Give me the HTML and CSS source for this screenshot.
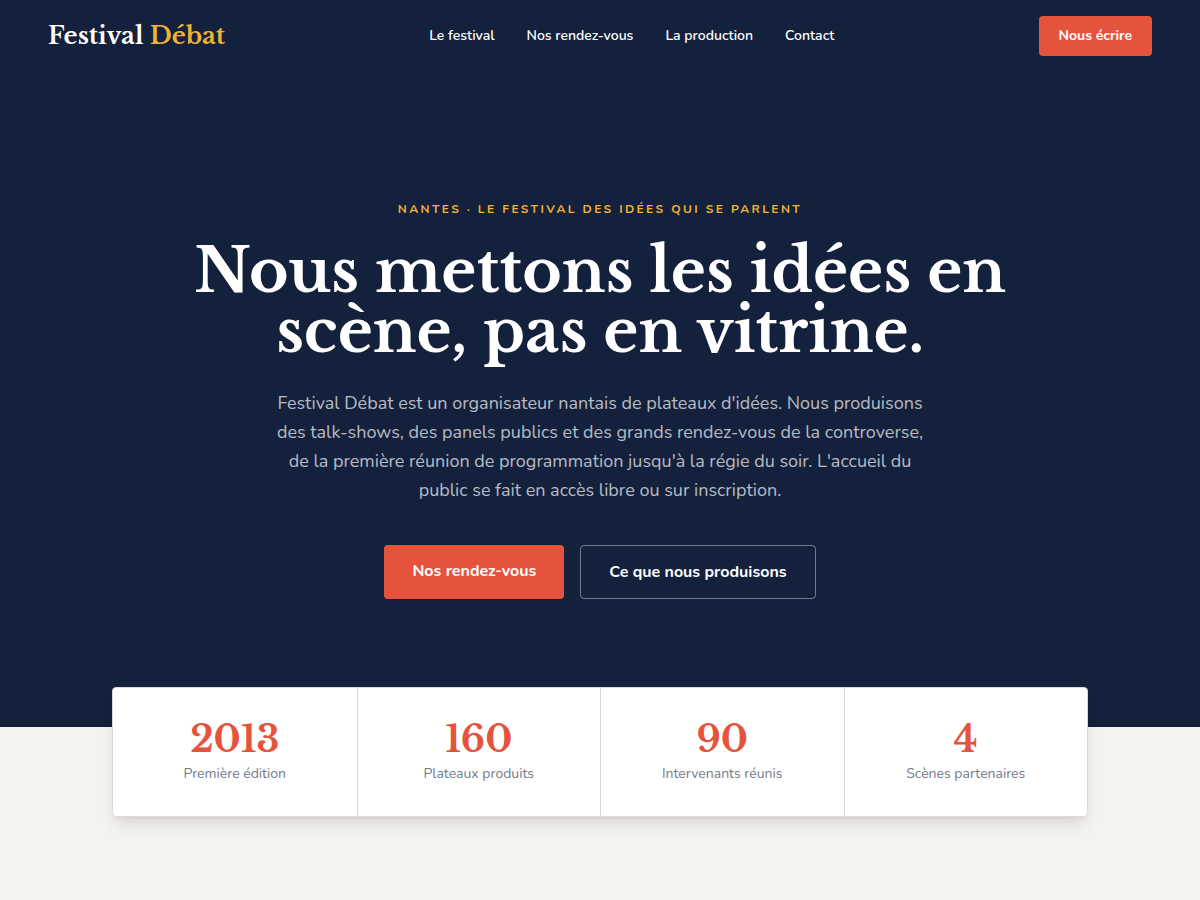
FILE: index.html
```html
<!DOCTYPE html>
<html lang="fr">
<head>
    <meta charset="UTF-8">
    <meta name="viewport" content="width=device-width, initial-scale=1.0">
    <title>Festival Débat</title>
    <link rel="stylesheet" href="styles.css">
</head>
<body>
    <!-- Header -->
    <header class="site-header">
        <a class="logo" href="#">Festival <span>Débat</span></a>
        <nav class="main-nav">
            <a href="#festival">Le festival</a>
            <a href="#rendez-vous">Nos rendez-vous</a>
            <a href="#production">La production</a>
            <a href="#contact">Contact</a>
        </nav>
        <a class="btn btn-small" href="#contact">Nous écrire</a>
    </header>

    <main>
        <!-- Hero -->
        <section class="hero" id="festival">
            <p class="eyebrow">Nantes · Le festival des idées qui se parlent</p>
            <h1>Nous mettons les idées en scène, pas en vitrine.</h1>
            <p class="lead">Festival Débat est un organisateur nantais de plateaux d'idées. Nous produisons des talk-shows, des panels publics et des grands rendez-vous de la controverse, de la première réunion de programmation jusqu'à la régie du soir. L'accueil du public se fait en accès libre ou sur inscription.</p>
            <div class="actions">
                <a class="btn" href="#rendez-vous">Nos rendez-vous</a>
                <a class="btn btn-outline" href="#production">Ce que nous produisons</a>
            </div>
        </section>

        <!-- Chiffres -->
        <section class="stats">
            <div class="stat">
                <strong>2013</strong>
                <span>Première édition</span>
            </div>
            <div class="stat">
                <strong>160</strong>
                <span>Plateaux produits</span>
            </div>
            <div class="stat">
                <strong>90</strong>
                <span>Intervenants réunis</span>
            </div>
            <div class="stat">
                <strong>4</strong>
                <span>Scènes partenaires</span>
            </div>
        </section>
    </main>
</body>
</html>
```
FILE: styles.css
```css
/* Reset */
* {
    margin: 0;
    padding: 0;
    box-sizing: border-box;
}

body {
    min-height: 100vh;
    font-family: Nunito, "Open Sans", sans-serif;
    background: #f5f3ee;
    color: #14213d;
    line-height: 1.6;
}

a {
    text-decoration: none;
}

/* Header */
.site-header {
    display: flex;
    justify-content: space-between;
    align-items: center;
    padding: 16px 48px;
    background: #14213d;
}

.logo {
    font-family: "Libre Baskerville", "Liberation Serif", serif;
    font-size: 24px;
    font-weight: 700;
    line-height: 40px;
    color: #fff;
}

.logo span {
    color: #f2b134;
}

.main-nav {
    display: flex;
    gap: 32px;
}

.main-nav a {
    color: #fff;
    font-size: 14px;
    font-weight: 600;
}

/* Buttons */
.btn {
    display: block;
    padding: 14px 28px;
    border-radius: 4px;
    background: #e6533c;
    color: #fff;
    font-size: 16px;
    font-weight: 700;
    line-height: 24px;
}

.btn-small {
    padding: 8px 20px;
    font-size: 14px;
}

.btn-outline {
    background: transparent;
    border: 1px solid rgba(255, 255, 255, 0.4);
}

/* Hero */
.hero {
    display: flex;
    flex-direction: column;
    align-items: center;
    padding: 128px 48px;
    background: #14213d;
    text-align: center;
}

.eyebrow {
    margin-bottom: 23px;
    color: #f2b134;
    font-size: 12px;
    font-weight: 700;
    line-height: 18px;
    letter-spacing: 0.2em;
    text-transform: uppercase;
}

.hero h1 {
    max-width: 860px;
    margin-bottom: 28px;
    color: #fff;
    font-family: "Libre Baskerville", "Liberation Serif", serif;
    font-size: 60px;
    font-weight: 700;
    line-height: 60px;
}

.lead {
    max-width: 664px;
    margin-bottom: 40px;
    color: rgba(255, 255, 255, 0.7);
    font-size: 18px;
    line-height: 29px;
}

.actions {
    display: flex;
    gap: 16px;
}

/* Stats */
.stats {
    position: relative;
    display: grid;
    grid-template-columns: repeat(4, 1fr);
    max-width: 976px;
    margin: -40px auto 0;
    background: #fff;
    border: 1px solid #dedbd0;
    border-radius: 4px;
    box-shadow: 0 10px 15px -3px rgba(0, 0, 0, 0.1), 0 4px 6px -4px rgba(0, 0, 0, 0.1);
}

.stat {
    display: flex;
    flex-direction: column;
    align-items: center;
    gap: 4px;
    padding: 32px 16px;
}

.stat + .stat {
    border-left: 1px solid #dedbd0;
}

.stat strong {
    color: #e6533c;
    font-family: "Libre Baskerville", "Liberation Serif", serif;
    font-size: 36px;
    line-height: 40px;
}

.stat span {
    color: #727a8b;
    font-size: 14px;
    line-height: 20px;
}
```
